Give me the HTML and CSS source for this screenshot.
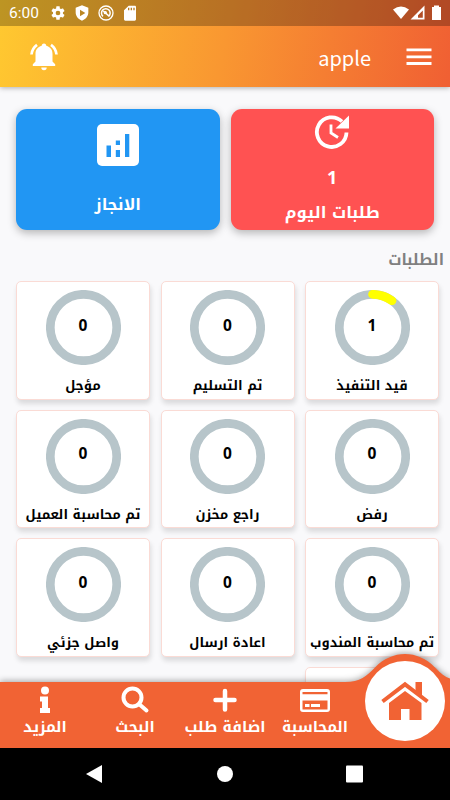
FILE: index.html
```html
<!DOCTYPE html>
<html lang="ar" dir="rtl">
<head>
  <meta charset="UTF-8" />
  <meta name="viewport" content="width=device-width, initial-scale=1.0" />
  <title>apple</title>
  <link rel="stylesheet" href="styles.css">
</head>
<body>
  <header class="top">
    <div class="status" dir="ltr">
      <span class="clock">6:00</span>
      <svg class="st-icon" viewBox="0 0 24 24"><path d="M19.4 13a7.500 7.500 0 0 0 0-2l2.100-1.600a.5.5 0 0 0 .1-.7l-2-3.400a.5.5 0 0 0-.6-.2l-2.500 1a7 7 0 0 0-1.700-1L14.500 2.400A.5.5 0 0 0 14 2h-4a.5.5 0 0 0-.5.4L9.200 5.100a7 7 0 0 0-1.700 1L5 5.100a.5.5 0 0 0-.6.2l-2 3.400a.5.5 0 0 0 .1.700L4.600 11a7.500 7.500 0 0 0 0 2l-2.100 1.600a.5.5 0 0 0-.1.700l2 3.400c.1.200.4.300.6.200l2.500-1a7 7 0 0 0 1.700 1l.3 2.700c0 .2.200.4.500.4h4c.3 0 .5-.2.500-.4l.3-2.700a7 7 0 0 0 1.700-1l2.500 1c.2.100.5 0 .6-.2l2-3.400a.5.5 0 0 0-.1-.7zM12 15.500a3.500 3.500 0 1 1 0-7 3.500 3.500 0 0 1 0 7z"/></svg>
      <svg class="st-icon" viewBox="0 0 24 24"><path fill-rule="evenodd" d="M12 .5L2.500 4v7c0 6 4 10.500 9.500 12.500 5.500-2 9.500-6.500 9.500-12.500V4zM9 7l8 5-8 5z"/></svg>
      <svg class="st-icon" viewBox="0 0 24 24"><circle cx="12" cy="12" r="10.500" fill="none" stroke="#fff" stroke-width="2"/><path d="M7.500 17A6.500 6.500 0 1 1 16 17M8 9l9 8" fill="none" stroke="#fff" stroke-width="2.300"/><circle cx="11" cy="11.500" r="2.500"/></svg>
      <svg class="st-icon" viewBox="0 0 24 24"><path fill-rule="evenodd" d="M19 1H10L3 8v13.500c0 1 .8 2 2 2h14c1.200 0 2-.9 2-2V3c0-1.200-.8-2-2-2zM9 4h2v4H9zm4 0h2v4h-2zm4 0h2v4h-2z"/></svg>
      <svg class="signals" viewBox="0 0 50 16"><path d="M1 4.500Q9 -1.500 17 4.500L9 14z"/><path fill-rule="evenodd" d="M32.500.5V14.500H18.500zM30.800 5.500L26 10.300V12.800H30.800z"/><path d="M42 .5h5v1.500h2V15h-9V2h2z"/></svg>
    </div>
    <div class="appbar">
      <svg class="burger" viewBox="0 0 26 18"><path d="M.5 1.800h25M.5 8.800h25M.5 15.500h25"/></svg>
      <h1>apple</h1>
      <svg class="bell" viewBox="0 0 28 28"><path d="M14 .5c1.500 0 2.300 1 2.300 2.300 4 1 6.200 4.200 6.200 8.200v7.500l2.700 2.700v1.800H2.800v-1.800l2.700-2.700V11c0-4 2.200-7.200 6.200-8.200C11.700 1.500 12.500.5 14 .5zM11.300 24.500h5.400a2.700 2.700 0 0 1-5.400 0z"/><path class="line" d="M1.500 11.500Q2 5.500 7 1.800M26.500 11.500Q26 5.500 21 1.800"/></svg>
    </div>
  </header>

  <main>
    <div class="summary">
      <a class="tile red" href="#">
        <svg class="clock-icon" viewBox="0 0 36 36"><path class="line" d="M32.500 18.500A14.800 14.800 0 1 1 28 7.500"/><path class="hand" d="M17 10.500V19l7 4.500"/><path d="M35 1.500v13H21.500z"/></svg>
        <strong>1</strong>
        <span class="tile-name">طلبات اليوم</span>
      </a>
      <a class="tile blue" href="#">
        <svg class="chart-icon" viewBox="0 0 42 42"><rect width="42" height="42" rx="5"/><path class="bars" d="M9.500 21.500h4.500V33H9.500zM18.800 16.500H23v4.500h-4.200zM18.800 26H23v7h-4.200zM28 10h4.300v23H28z"/></svg>
        <span class="tile-name">الانجاز</span>
      </a>
    </div>

    <h2>الطلبات</h2>

    <div class="orders">
      <div class="order"><div class="ring"><svg viewBox="0 0 75 75"><circle cx="37.500" cy="37.500" r="33.200"/><path d="M37.500 4.300A33.200 33.200 0 0 1 57 10.700"/></svg><b>1</b></div><p>قيد التنفيذ</p></div>
      <div class="order"><div class="ring"><svg viewBox="0 0 75 75"><circle cx="37.500" cy="37.500" r="33.200"/></svg><b>0</b></div><p>تم التسليم</p></div>
      <div class="order"><div class="ring"><svg viewBox="0 0 75 75"><circle cx="37.500" cy="37.500" r="33.200"/></svg><b>0</b></div><p>مؤجل</p></div>
      <div class="order"><div class="ring"><svg viewBox="0 0 75 75"><circle cx="37.500" cy="37.500" r="33.200"/></svg><b>0</b></div><p>رفض</p></div>
      <div class="order"><div class="ring"><svg viewBox="0 0 75 75"><circle cx="37.500" cy="37.500" r="33.200"/></svg><b>0</b></div><p>راجع مخزن</p></div>
      <div class="order"><div class="ring"><svg viewBox="0 0 75 75"><circle cx="37.500" cy="37.500" r="33.200"/></svg><b>0</b></div><p>تم محاسبة العميل</p></div>
      <div class="order"><div class="ring"><svg viewBox="0 0 75 75"><circle cx="37.500" cy="37.500" r="33.200"/></svg><b>0</b></div><p>تم محاسبة المندوب</p></div>
      <div class="order"><div class="ring"><svg viewBox="0 0 75 75"><circle cx="37.500" cy="37.500" r="33.200"/></svg><b>0</b></div><p>اعادة ارسال</p></div>
      <div class="order"><div class="ring"><svg viewBox="0 0 75 75"><circle cx="37.500" cy="37.500" r="33.200"/></svg><b>0</b></div><p>واصل جزئي</p></div>
      <div class="order"></div>
    </div>
  </main>

  <nav class="tabs">
    <svg class="tabs-bg" viewBox="0 0 450 94"><path d="M0 28H345C360 28 367 22 375 13.500C392 -4.500 418 -4.500 435 13.500C440 19 445 23 450 24.500V94H0z"/></svg>
    <a class="tab home" href="#"><svg viewBox="0 0 50 40"><path d="M9 22L25 10l16.500 12V39H29.500V28H21v11H9z"/><path d="M2.500 20.500L25 3.300 47.500 20.500" class="roof"/><path d="M35.500 1H42v15l-6.500-5z"/></svg></a>
    <a class="tab" href="#"><svg viewBox="0 0 30 28"><path fill-rule="evenodd" d="M3 3h24a3 3 0 0 1 3 3v17a3 3 0 0 1-3 3H3a3 3 0 0 1-3-3V6a3 3 0 0 1 3-3zM2.500 6v2.300h25V6zM2.500 14.500v9h25v-9z"/><path d="M5 18h4.500v3H5zM11 18h9v3h-9z"/></svg><span>المحاسبة</span></a>
    <a class="tab" href="#"><svg viewBox="0 0 30 28"><path class="plus" d="M15 5v18.500M5.500 14h19"/></svg><span>اضافة طلب</span></a>
    <a class="tab" href="#"><svg viewBox="0 0 30 28"><circle class="lens" cx="12.500" cy="11.500" r="9"/><path class="lens" d="M19 18l7.500 6.500"/></svg><span>البحث</span></a>
    <a class="tab" href="#"><svg viewBox="0 0 30 28"><circle cx="15" cy="4.500" r="4"/><path d="M10 10.500h8v11.500h2v5H10v-5h2v-6.500h-2z"/></svg><span>المزيد</span></a>
  </nav>

  <footer class="system" dir="ltr">
    <svg viewBox="0 0 450 52"><path d="M86 26L102 17v18z"/><circle cx="225" cy="26" r="8"/><rect x="346" y="17.500" width="17" height="17" rx="1"/></svg>
  </footer>
</body>
</html>
```

FILE: styles.css
```css
* { box-sizing: border-box; }
body {
  width: 450px;
  height: 800px;
  margin: 0;
  display: flex;
  flex-direction: column;
  overflow: hidden;
  background: #f9f9fb;
  font-family: "Noto Kufi Arabic", "Noto Sans Arabic", "DejaVu Sans", sans-serif;
  font-weight: bold;
}
a { text-decoration: none; }
svg { fill: #fff; display: block; }
.top {
  position: relative;
  height: 87px;
  background: linear-gradient(101deg, #ffc930 0%, #f99731 50%, #f05f33 100%);
  box-shadow: 0 1px 5px rgba(0,0,0,0.3);
}
.status {
  height: 26px;
  padding: 0 8px 0 9px;
  display: flex;
  align-items: center;
  gap: 8px;
  background: rgba(0,0,0,0.26);
}
.clock {
  width: 33px;
  color: #fff;
  font: 15.5px Roboto, sans-serif;
}
.st-icon {
  width: 16px;
  height: 16px;
}
.signals {
  width: 50px;
  height: 16px;
  margin-left: auto;
}
.appbar {
  height: 61px;
  display: flex;
  align-items: center;
  padding: 0 18px 0 30px;
}
.burger {
  width: 26px;
  height: 18px;
  stroke: #fff;
  stroke-width: 2.8;
}
.appbar h1 {
  margin: 1px 35px 0 auto;
  color: #fff;
  font: 20px "Noto Sans CJK SC", sans-serif;
}
.bell {
  width: 28px;
  height: 28px;
}
.bell .line {
  fill: none;
  stroke: #fff;
  stroke-width: 2.7;
}
main {
  flex: 1;
  min-height: 0;
  overflow: hidden;
}
.summary {
  display: flex;
  gap: 11px;
  padding: 22px 16px 0;
}
.tile {
  flex: 1;
  height: 121px;
  display: flex;
  flex-direction: column;
  align-items: center;
  color: #fff;
  border-radius: 11px;
  box-shadow: 0 3px 8px rgba(0,0,0,0.28);
}
.red {
  background: #ff5252;
  padding-top: 5px;
}
.blue {
  background: #2196f3;
  padding-top: 15px;
}
.clock-icon {
  width: 36px;
  height: 36px;
}
.clock-icon .line {
  fill: none;
  stroke: #fff;
  stroke-width: 3.8;
}
.clock-icon .hand {
  fill: none;
  stroke: #fff;
  stroke-width: 2.8;
}
.tile strong {
  margin-top: 14px;
  font: bold 18px/26px "Noto Sans", sans-serif;
}
.tile-name {
  font-size: 16.4px;
  line-height: 24px;
  margin-top: 11px;
}
.chart-icon {
  width: 42px;
  height: 42px;
}
.chart-icon .bars { fill: #2196f3; }
.blue .tile-name { margin-top: 27px; }
h2 {
  margin: 18px 6px 9px 0;
  color: #808080;
  font-size: 15.3px;
  line-height: 24px;
}
.orders {
  display: grid;
  grid-template-columns: repeat(3, 134px);
  grid-auto-rows: 118.6px;
  column-gap: 10.5px;
  row-gap: 10px;
  padding-right: 11px;
}
.order {
  display: flex;
  flex-direction: column;
  align-items: center;
  padding-top: 8px;
  background: #fff;
  border: 1px solid #fadbd5;
  border-radius: 5px;
  box-shadow: 1px 4px 5px rgba(0,0,0,0.12);
}
.ring {
  display: grid;
  place-items: center;
  width: 75px;
  height: 75px;
}
.ring svg, .ring b { grid-area: 1 / 1; }
.ring svg {
  width: 75px;
  height: 75px;
  fill: none;
  stroke: #b7c5ca;
  stroke-width: 8.7;
}
.ring path {
  stroke: #ff0;
  stroke-linecap: round;
}
.ring b {
  margin-bottom: 6px;
  font: bold 15.5px/20px "Noto Sans", sans-serif;
}
.order p {
  margin: 10px 0 0;
  font-size: 13.2px;
  line-height: 22px;
  white-space: nowrap;
}
.tabs {
  position: relative;
  height: 66px;
  display: flex;
}
.tabs-bg {
  position: absolute;
  left: 0;
  bottom: 0;
  width: 450px;
  height: 94px;
  fill: #f16334;
  overflow: visible;
  filter: drop-shadow(0 -1px 3px rgba(0,0,0,0.35));
}
.tab {
  position: relative;
  width: 90px;
  display: flex;
  flex-direction: column;
  align-items: center;
  padding-top: 4px;
  color: #fff;
  font-size: 15px;
  line-height: 26px;
  white-space: nowrap;
}
.tab svg {
  width: 30px;
  height: 28px;
}
.plus {
  stroke: #fff;
  stroke-width: 4.5;
  stroke-linecap: round;
}
.lens {
  fill: none;
  stroke: #fff;
  stroke-width: 4;
  stroke-linecap: round;
}
.home {
  width: 80px;
  height: 80px;
  margin: -21px 5px 0;
  padding-top: 20px;
  background: #fff;
  border-radius: 50%;
}
.home svg {
  width: 50px;
  height: 40px;
  fill: #f16334;
}
.home .roof {
  fill: none;
  stroke: #f16334;
  stroke-width: 4;
}
.system {
  position: relative;
  height: 52px;
  background: #000;
}
```
